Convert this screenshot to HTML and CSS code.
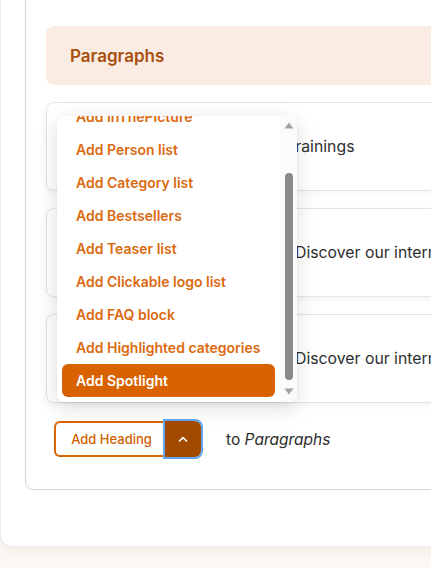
FILE: index.html
```html
<!DOCTYPE html>
<html lang="en">
<head>
<meta charset="utf-8">
<title>Paragraphs</title>
<link rel="stylesheet" href="styles.css">
</head>
<body>
<div class="page">
  <div class="panel">
    <div class="field">
      <div class="field-header"><h2 class="field-title">Paragraphs</h2></div>
      <div class="items">
        <div class="item"><span class="item-text item-text--first">Trainings</span></div>
        <div class="item"><span class="item-text">Discover our international trainings</span></div>
        <div class="item"><span class="item-text">Discover our international programmes</span></div>
      </div>
      <div class="actions">
        <div class="split">
          <button class="btn-add" type="button">Add Heading</button>
          <button class="btn-toggle" type="button" aria-label="More">
            <svg width="10" height="6" viewBox="0 0 10 6"><polyline points="1.5,5 5,1.6 8.5,5" fill="none" stroke="#fff" stroke-width="1.7" stroke-linecap="round" stroke-linejoin="round"/></svg>
          </button>
        </div>
        <span class="to">to <em>Paragraphs</em></span>
        <div class="dropdown">
          <ul class="menu">
            <li class="menu-item">Add InThePicture</li>
            <li class="menu-item">Add Person list</li>
            <li class="menu-item">Add Category list</li>
            <li class="menu-item">Add Bestsellers</li>
            <li class="menu-item">Add Teaser list</li>
            <li class="menu-item">Add Clickable logo list</li>
            <li class="menu-item">Add FAQ block</li>
            <li class="menu-item">Add Highlighted categories</li>
            <li class="menu-item menu-item--active">Add Spotlight</li>
          </ul>
          <div class="scrollbar">
            <svg class="arrow" width="10" height="7" viewBox="0 0 10 7"><polygon points="5,0.5 9.5,6.5 0.5,6.5" fill="#a3a3a3"/></svg>
            <div class="thumb"></div>
            <svg class="arrow" width="10" height="7" viewBox="0 0 10 7"><polygon points="0.5,0.5 9.5,0.5 5,6.5" fill="#a3a3a3"/></svg>
          </div>
        </div>
      </div>
    </div>
  </div>
</div>
</body>
</html>
```

FILE: styles.css
```css
html, body {
  margin: 0;
  padding: 0;
  overflow: hidden;
}

body {
  background: #fcf7f3;
  font-family: Inter, "Noto Sans", sans-serif;
  color: #2b2b2b;
  height: 568px;
}

.page {
  width: 760px;
}

.panel {
  margin-top: -24px;
  background: #fff;
  border: 1px solid #ececec;
  border-radius: 12px;
  box-shadow: 0 3px 10px rgba(120, 80, 40, 0.07);
  padding: 0 0 56px 24px;
}

.field {
  border: 1px solid #d6d6d6;
  border-radius: 8px;
  padding: 48px 0 32px 20px;
}

.field-header {
  background: #faece2;
  border-radius: 8px;
  height: 59px;
  display: flex;
  align-items: center;
  padding: 0 24px;
}

.field-title {
  margin: 0;
  font-size: 17px;
  font-weight: 600;
  color: #a84f0e;
}

.items {
  margin-top: 17px;
  display: flex;
  flex-direction: column;
  gap: 17px;
}

.item {
  height: 87px;
  border: 1px solid #e4e4e4;
  border-radius: 8px;
  box-shadow: 0 2px 6px rgba(0, 0, 0, 0.05);
  display: flex;
  align-items: center;
  padding-left: 248px;
  background: #fff;
}

.item-text {
  font-size: 15.8px;
  color: #2e2e2e;
  white-space: nowrap;
}

.item-text--first {
  margin-left: -9px;
}

.actions {
  position: relative;
  margin-top: 18px;
  margin-left: 8px;
  display: flex;
  align-items: center;
  gap: 25px;
}

.split {
  display: flex;
  align-items: stretch;
}

.btn-add {
  box-sizing: border-box;
  width: 111px;
  height: 36px;
  border: 2px solid #d96400;
  border-right: none;
  border-radius: 6px 0 0 6px;
  background: #fff;
  color: #d06000;
  font-family: Inter, "Noto Sans", sans-serif;
  font-size: 13px;
  font-weight: 500;
  padding: 0 0 0 2px;
  cursor: pointer;
}

.btn-toggle {
  box-sizing: border-box;
  width: 36px;
  height: 36px;
  border: none;
  border-radius: 0 6px 6px 0;
  background: #a34a00;
  display: flex;
  align-items: center;
  justify-content: center;
  padding: 0;
  outline: 2px solid #62a8f0;
  outline-offset: 0;
  cursor: pointer;
}

.to {
  font-size: 15.5px;
  color: #2b2b2b;
}

.dropdown {
  position: absolute;
  left: 3px;
  bottom: calc(100% + 19px);
  width: 240px;
  height: 286px;
  background: #fff;
  border-radius: 6px;
  box-shadow: 0 6px 22px rgba(0, 0, 0, 0.13), 0 1px 3px rgba(0, 0, 0, 0.06);
  display: flex;
  overflow: hidden;
}

.menu {
  list-style: none;
  margin: 0;
  padding: 0 5px 5px 5px;
  flex: 1;
  display: flex;
  flex-direction: column;
  justify-content: flex-end;
  overflow: hidden;
}

.menu-item {
  flex: none;
  height: 33px;
  line-height: 33px;
  padding-left: 14px;
  border-radius: 6px;
  font-size: 14px;
  font-weight: 600;
  color: #db6a10;
  white-space: nowrap;
}

.menu-item--active {
  background: #d96200;
  color: #fff;
}

.scrollbar {
  width: 17px;
  background: #fbfbfb;
  display: flex;
  flex-direction: column;
  align-items: center;
  padding: 6px 0 7px;
  box-sizing: border-box;
}

.arrow {
  flex: none;
  margin-left: 1px;
}

.thumb {
  width: 8px;
  margin: 44px 0 8px 1px;
  flex: 1;
  background: #898989;
  border-radius: 4px;
}
```
